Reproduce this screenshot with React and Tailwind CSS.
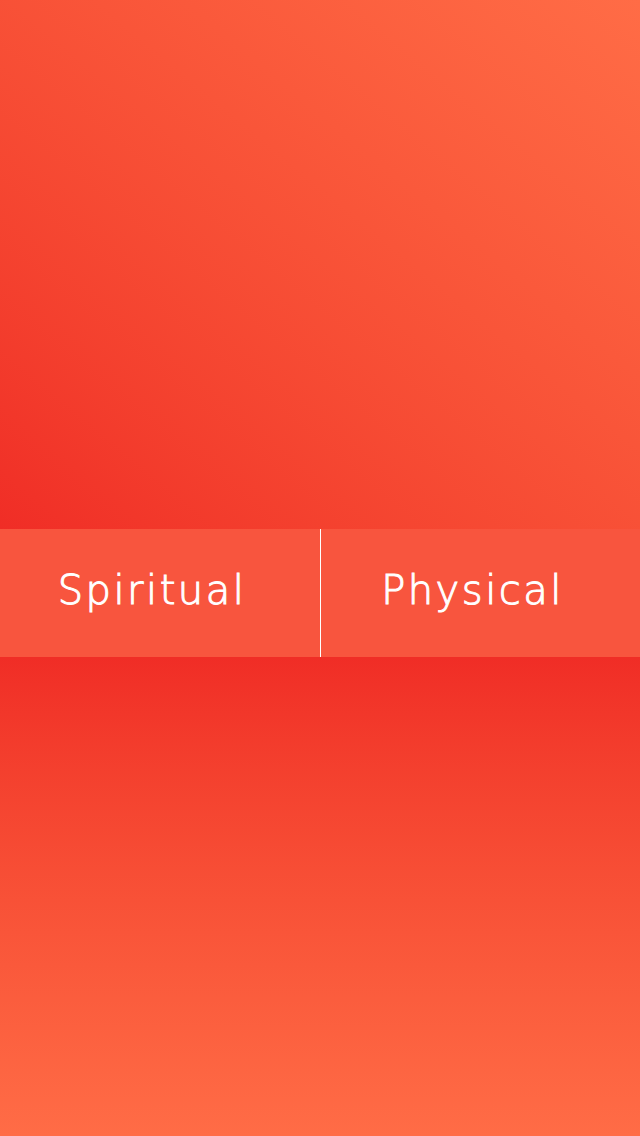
import React from 'react';

export default function App() {
  const labelClass =
    "text-[40px] leading-none font-extralight tracking-[2.5px] text-white pr-4 pb-1.5 [-webkit-text-stroke:1px_white]";

  return (
    <div className="w-[640px] h-[1136px] flex flex-col" style={{ fontFamily: '"DejaVu Sans", "Liberation Sans", sans-serif' }}>
      {/* top panel */}
      <div className="h-[529px] bg-gradient-to-tr from-[#f02d26] to-[#ff6c46]" />

      {/* tab band */}
      <div className="h-[128px] flex bg-[#f8553e]">
        <button className="w-[320px] flex items-center justify-center">
          <span className={labelClass}>Spiritual</span>
        </button>
        <div className="w-px bg-white" />
        <button className="flex-1 flex items-center justify-center">
          <span className={labelClass}>Physical</span>
        </button>
      </div>

      {/* bottom panel */}
      <div className="flex-1 bg-gradient-to-b from-[#f02d26] to-[#ff6c46]" />
    </div>
  );
}
